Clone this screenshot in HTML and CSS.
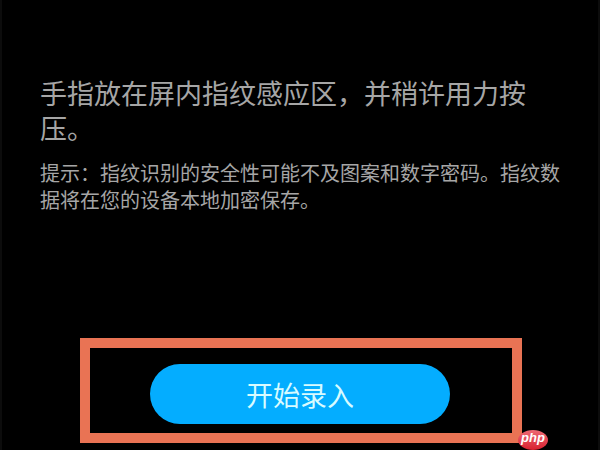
FILE: index.html
```html
<!DOCTYPE html>
<html lang="zh-CN">
<head>
    <meta charset="UTF-8">
    <meta name="viewport" content="width=device-width, initial-scale=1.0">
    <title>指纹录入</title>
    <link rel="stylesheet" href="styles.css">
</head>
<body>
    <main class="enroll">
        <div class="enroll-text">
            <h1 class="enroll-title">手指放在屏内指纹感应区，并稍许用力按压。</h1>
            <p class="enroll-tip">提示：指纹识别的安全性可能不及图案和数字密码。指纹数据将在您的设备本地加密保存。</p>
        </div>
        <div class="highlight">
            <button type="button" class="start-button">开始录入</button>
        </div>
    </main>
    <span class="php-badge">php</span>
</body>
</html>
```

FILE: styles.css
```css
:root {
    --color-fondo: #000000;
    --color-borde: #0c0c0c;
    --color-texto: #a6a6a6;
    --color-boton: #04adff;
    --color-marco: #e97354;
}
* {
    box-sizing: border-box;
}
body {
    position: relative;
    min-height: 100vh;
    margin: 0;
    font-family: "Noto Sans CJK SC", sans-serif;
    background-color: var(--color-fondo);
    color: var(--color-texto);
    border-left: 2px solid var(--color-borde);
    border-right: 2px solid var(--color-borde);
}
.enroll {
    display: flex;
    flex-direction: column;
    min-height: 100vh;
    padding: 75px 36px 7px 38px;
}
.enroll-title {
    margin: 0 0 14px;
    padding-right: 20px;
    font-size: 27px;
    line-height: 35px;
    font-weight: 400;
}
.enroll-tip {
    margin: 0;
    font-size: 20px;
    line-height: 27px;
    font-weight: 400;
}
/* marco alrededor del botón */
.highlight {
    display: flex;
    justify-content: center;
    margin: auto 40px 0;
    padding: 16px 62px 9px 60px;
    border: 10px solid var(--color-marco);
}
.start-button {
    flex: 1;
    height: 60px;
    padding: 0;
    border: none;
    border-radius: 30px;
    background-color: var(--color-boton);
    color: #d8fbff;
    font-family: inherit;
    font-size: 27px;
    line-height: 35px;
    cursor: pointer;
}
.php-badge {
    position: absolute;
    right: 50px;
    bottom: 0;
    width: 30px;
    height: 20px;
    border-radius: 50%;
    background: linear-gradient(#ee6a75, #d8202f);
    color: #ffffff;
    font-family: "Liberation Sans", sans-serif;
    font-size: 13px;
    line-height: 16px;
    font-weight: 700;
    font-style: italic;
    text-align: center;
}
```
